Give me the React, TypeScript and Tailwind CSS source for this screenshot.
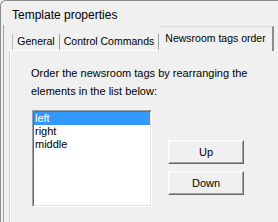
import React from 'react'

const items = ['left', 'right', 'middle']

function Bevel({ children, className }: { children: React.ReactNode; className?: string }) {
  // raised windows-classic button
  return (
    <div className={`border-t border-l border-b border-r border-t-white border-l-white border-b-[#696969] border-r-[#696969] ${className ?? ''}`}>
      <div className="flex h-full w-full items-center justify-center border border-t-[#f5f5f5] border-l-[#f5f5f5] border-b-[#a0a0a0] border-r-[#a0a0a0] bg-[#f0f0f0]">
        {children}
      </div>
    </div>
  )
}

export default function App() {
  return (
    <div
      className="h-[222px] w-[278px] overflow-hidden bg-[#f0f0f0] text-[11px] text-black"
      style={{ fontFamily: '"Liberation Sans", Arial, sans-serif' }}>
      <div className="flex h-full flex-col rounded-tl-[6px] border-t border-l border-[#8c8c8c] bg-[#f0f0f0]">
        {/* title bar */}
        <div className="flex h-[24px] items-center pl-[11px] pt-[4px] text-[12px]">Template properties</div>

        {/* client area */}
        <div className="ml-[2px] flex flex-1 flex-col border-l border-[#a0a0a0] pl-[5px]">
          {/* tabs */}
          <div className="flex h-[25px] items-end pl-[3px] text-[10.5px]">
            <div className="flex h-[16px] w-[48px] items-center justify-center border-l border-r border-l-[#bdbdbd] border-r-[#a0a0a0]">
              General
            </div>
            <div className="flex h-[16px] w-[99px] items-center justify-center border-r border-[#a0a0a0]">
              Control Commands
            </div>
            <div className="relative z-10 -mb-px flex h-[25px] w-[115px] items-center justify-center border-t border-r-2 border-t-[#dadada] border-r-[#8a8a8a] bg-[#f0f0f0] pb-[1px]">
              Newsroom tags order
            </div>
          </div>

          {/* panel */}
          <div className="flex flex-1 flex-col border-t border-l border-t-white border-l-[#d4d4d4]">
            <div className="flex flex-1 flex-col border-l border-white pl-[20px] pt-[13px]">
              <p className="leading-[18px]">
                Order the newsroom tags by rearranging the
                <br />
                elements in the list below:
              </p>

              <div className="mt-[10px] flex items-start">
                <div className="ml-[1px] h-[97px] w-[120px] border border-t-[#a0a0a0] border-l-[#a0a0a0] border-b-white border-r-white">
                  <div className="h-full w-full border border-t-[#696969] border-l-[#696969] border-b-[#e3e3e3] border-r-[#e3e3e3] bg-white">
                    {items.map((item, i) => (
                      <div
                        key={item}
                        className={`h-[13px] pl-[1px] leading-[13px] ${i === 0 ? 'bg-[#3399ff] text-white' : ''}`}>
                        {item}
                      </div>
                    ))}
                  </div>
                </div>

                <div className="ml-[16px] mt-[30px] flex flex-col gap-[7px]">
                  <Bevel className="h-[24px] w-[76px]">Up</Bevel>
                  <Bevel className="h-[24px] w-[76px]">Down</Bevel>
                </div>
              </div>
            </div>
          </div>
        </div>
      </div>
    </div>
  )
}
